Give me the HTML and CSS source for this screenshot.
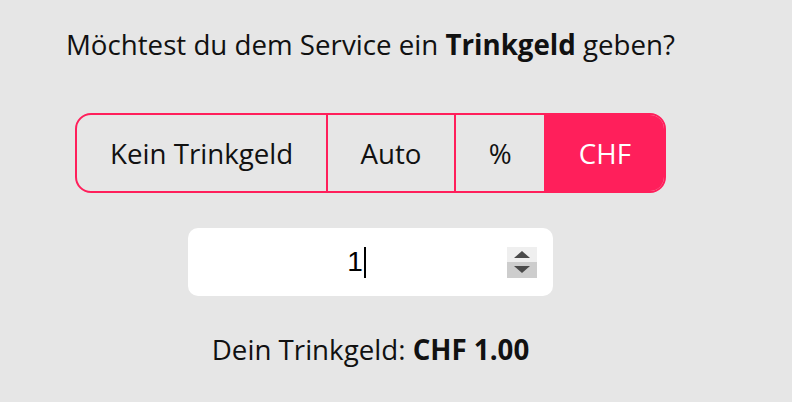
FILE: index.html
```html
<!DOCTYPE html>
<html lang="de">
<head>
  <meta charset="UTF-8" />
  <title>Trinkgeld</title>
  <link rel="stylesheet" href="styles.css">
</head>
<body>
  <main class="tip">
    <!-- question -->
    <p class="tip-question">Möchtest du dem Service ein <b>Trinkgeld</b> geben?</p>

    <!-- mode switch -->
    <div class="tip-modes">
      <button class="mode">Kein Trinkgeld</button>
      <button class="mode">Auto</button>
      <button class="mode">%</button>
      <button class="mode active">CHF</button>
    </div>

    <!-- amount field -->
    <div class="amount">
      <div class="amount-value"><span>1</span><span class="caret"></span></div>
      <div class="spin">
        <span class="spin-up"></span>
        <span class="spin-down"></span>
      </div>
    </div>

    <p class="tip-result">Dein Trinkgeld: <b>CHF 1.00</b></p>
  </main>
</body>
</html>
```

FILE: styles.css
```css
/* --- tokens --- */
:root {
  --pink: #ff1f5b;
  --bg:   #e6e6e6;
  --text: #111;
}

* { box-sizing: border-box; margin:0; padding:0; }

body {
  background: var(--bg);
  color: var(--text);
  font-family: "Open Sans", "Noto Sans", sans-serif;
}

.tip {
  width: 741px;
  display: flex;
  flex-direction: column;
  align-items: center;
  padding-top: 25px;
}

.tip-question { font-size:27.7px; line-height:38px; }
.tip-question b, .tip-result b { font-weight:700; }

/* --- mode switch --- */
.tip-modes {
  display: flex;
  margin-top: 50px;
  height: 80px;
  border: 2px solid var(--pink);
  border-radius: 16px;
  overflow: hidden;
}
.mode {
  font: inherit;
  font-size: 27.7px;
  color: var(--text);
  background: transparent;
  border: none;
  border-left: 2px solid var(--pink);
  padding: 0 32.6px;
  cursor: pointer;
}
.mode:first-child { border-left: none; }
.mode.active { background: var(--pink); color:#fff; }

/* --- amount input --- */
.amount {
  margin-top: 35px;
  width: 365px;
  height: 68px;
  background: #fff;
  border-radius: 10px;
  display: flex;
  align-items: center;
  padding: 0 16px 0 18px;
}
.amount-value {
  flex: 1;
  display: flex;
  justify-content: center;
  align-items: center;
  font-family: "Liberation Sans", Arial, sans-serif;
  font-size: 28px;
  color: #000;
}
.caret {
  width: 2px;
  height: 31px;
  background: #000;
  margin-left: 1px;
}
.spin {
  width: 30px;
  height: 31px;
  display: flex;
  flex-direction: column;
}
.spin span {
  flex: 1;
  display: flex;
  align-items: center;
  justify-content: center;
}
.spin-up { background:#efefef; }
.spin-down { background:#cdcdcd; }
.spin-up::after,
.spin-down::after {
  content: "";
  border-left: 8px solid transparent;
  border-right: 8px solid transparent;
}
.spin-up::after { border-bottom: 7px solid #4a4a4a; }
.spin-down::after { border-top: 7px solid #4a4a4a; }

.tip-result {
  margin-top: 34px;
  font-size: 27.7px;
  line-height: 38px;
}
```
